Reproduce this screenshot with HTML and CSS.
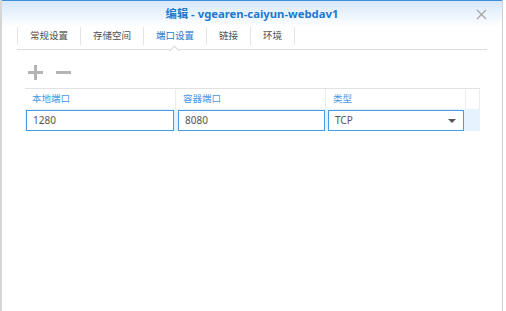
FILE: index.html
```html
<!DOCTYPE html>
<html lang="zh">
<head>
  <meta charset="UTF-8">
  <title>编辑 - vgearen-caiyun-webdav1</title>
  <link rel="stylesheet" href="styles.css">
</head>
<body>
  <div class="window">
    <div class="titlebar">
      <span class="title">编辑 - vgearen-caiyun-webdav1</span>
      <svg class="close" width="11" height="11" viewBox="0 0 11 11">
        <path d="M1 1L10 10M10 1L1 10" stroke="#a8a8a8" stroke-width="1.4" fill="none"/>
      </svg>
    </div>

    <div class="tabbar">
      <div class="tabs">
        <span class="tab">常规设置</span>
        <span class="tab">存储空间</span>
        <span class="tab active">端口设置</span>
        <span class="tab">链接</span>
        <span class="tab">环境</span>
      </div>
    </div>

    <div class="content">
      <div class="toolbar">
        <svg class="tool" width="17" height="17" viewBox="0 0 17 17">
          <path d="M8.5 1V16M1 8.5H16" stroke="#b4b4b4" stroke-width="3" fill="none"/>
        </svg>
        <svg class="tool" width="17" height="17" viewBox="0 0 17 17">
          <path d="M1 8.5H16" stroke="#b4b4b4" stroke-width="3" fill="none"/>
        </svg>
      </div>

      <div class="grid">
        <div class="head">本地端口</div>
        <div class="head">容器端口</div>
        <div class="head">类型</div>
        <div class="head"></div>

        <div class="cell"><div class="field">1280</div></div>
        <div class="cell"><div class="field">8080</div></div>
        <div class="cell">
          <div class="field select">
            <span>TCP</span>
            <span class="arrow"></span>
          </div>
        </div>
        <div class="cell"></div>
      </div>
    </div>
  </div>
</body>
</html>
```

FILE: styles.css
```css
body {
  margin: 0;
  background-color: #ffffff;
  font-family: "Noto Sans", "Noto Sans CJK SC", sans-serif;
}

.window {
  width: 500px;
  height: 311px;
  border-left: 2px solid #d6d6d6;
  border-right: 1px solid #cfcfcf;
  background-color: #ffffff;
  box-sizing: content-box;
}

.titlebar {
  position: relative;
  height: 26px;
  border-top: 1px solid #3c8ede;
  background: linear-gradient(to bottom, #d6e8fb, #ffffff);
  display: flex;
  align-items: center;
  justify-content: center;
}

.title {
  font-size: 11.3px;
  font-weight: bold;
  color: #2079d0;
  margin-top: -2px;
}

.close {
  position: absolute;
  right: 15px;
  top: 8px;
}

.tabbar {
  margin: 0 15px;
  padding-bottom: 4px;
  border-bottom: 1px solid #dedede;
  position: relative;
}

.tabs {
  display: flex;
  border-left: 1px solid #e4e4e4;
}

.tab {
  position: relative;
  height: 18px;
  line-height: 18px;
  padding: 0 12px;
  border-right: 1px solid #e4e4e4;
  font-size: 9.5px;
  color: #505050;
}

.tab.active {
  color: #1f7ad2;
}

.tab.active::after {
  content: "";
  position: absolute;
  left: 50%;
  bottom: -9px;
  margin-left: -4px;
  width: 6px;
  height: 6px;
  background-color: #ffffff;
  border-left: 1px solid #d8d8d8;
  border-top: 1px solid #d8d8d8;
  transform: rotate(45deg);
}

.content {
  padding: 14px 0 0 23px;
}

.toolbar {
  display: flex;
  gap: 11px;
  padding-left: 2px;
  height: 24px;
}

.grid {
  display: grid;
  grid-template-columns: 151px 150px 140px 14px;
  width: 455px;
  border-top: 1px solid #e2e2e2;
}

.head {
  height: 20px;
  line-height: 20px;
  padding-left: 7px;
  font-size: 9.5px;
  color: #4a98e3;
  border-right: 1px solid #ececec;
}

.head:last-child {
  border-right: none;
}

.cell {
  background-color: #e6f2fd;
  height: 22px;
  padding-top: 1px;
  box-sizing: border-box;
}

.field {
  height: 21px;
  margin-left: 1px;
  margin-right: 2px;
  box-sizing: border-box;
  border: 1px solid #439de8;
  background-color: #ffffff;
  padding-left: 6px;
  font-size: 10px;
  line-height: 19px;
  color: #555555;
}

.cell:nth-child(6) .field {
  margin-left: 2px;
  margin-right: 1px;
}

.cell:nth-child(7) .field {
  margin-left: 2px;
}

.select {
  display: flex;
  justify-content: space-between;
  align-items: center;
  padding-right: 7px;
}

.arrow {
  width: 0;
  height: 0;
  border-left: 4px solid transparent;
  border-right: 4px solid transparent;
  border-top: 4px solid #555555;
}
```
